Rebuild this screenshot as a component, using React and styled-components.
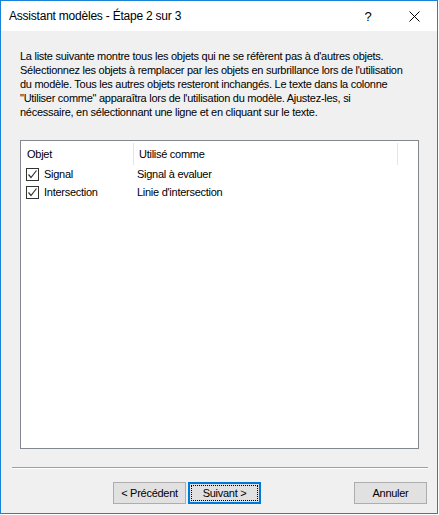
import React from "react";
import styled, { createGlobalStyle } from "styled-components";

const Global = createGlobalStyle`
  html, body { margin: 0; padding: 0; background: #ffffff; }
  body { font-family: "Liberation Sans", Arial, sans-serif; }
  * { box-sizing: border-box; }
`;

const Window = styled.div`
  width: 438px;
  height: 514px;
  border: 1px solid #1883d7;
  display: flex;
  flex-direction: column;
  background: #f0f0f0;
  font-family: "Liberation Sans", Arial, sans-serif;
  font-size: 11px;
  letter-spacing: -0.27px;
  color: #000;
`;

const TitleBar = styled.div`
  height: 30px;
  flex: none;
  background: #ffffff;
  display: flex;
  align-items: center;
  padding-left: 8px;
`;

const Title = styled.div`
  flex: 1;
  font-size: 12px;
  letter-spacing: -0.22px;
  color: #000;
  white-space: nowrap;
`;

const CaptionButton = styled.div`
  width: 46px;
  height: 30px;
  display: flex;
  align-items: center;
  justify-content: center;
  font-size: 13px;
  color: #000;
`;

const Body = styled.div`
  flex: none;
  display: flex;
  flex-direction: column;
  padding: 18px 18px 0 19px;
`;

const Intro = styled.div`
  line-height: 14px;
`;

const Line = styled.span`
  display: block;
  white-space: nowrap;
`;

const ListBox = styled.div`
  margin-top: 21px;
  width: 399px;
  height: 309px;
  border: 1px solid #828790;
  background: #ffffff;
  display: flex;
  flex-direction: column;
`;

const HeaderRow = styled.div`
  display: grid;
  grid-template-columns: 113px 264px;
  height: 24px;
`;

const HeaderCell = styled.div`
  display: flex;
  align-items: center;
  padding-left: ${(p) => p.$pad}px;
  border-right: 1px solid #e5e5e5;
  margin: 2px 0 0 0;
`;

const Row = styled.div`
  display: grid;
  grid-template-columns: 113px 264px;
  height: 18px;
  align-items: center;
`;

const FirstCell = styled.div`
  display: flex;
  align-items: center;
  padding-left: 5px;
  gap: 5px;
`;

const Cell = styled.div`
  padding-left: 3px;
`;

const Check = styled.span`
  width: 13px;
  height: 13px;
  border: 1px solid #333333;
  background: #fff;
  display: inline-flex;
  align-items: center;
  justify-content: center;
`;

const Separator = styled.div`
  flex: none;
  margin: 18px 9px 0 11px;
  height: 2px;
  border-top: 1px solid #a0a0a0;
  border-bottom: 1px solid #ffffff;
`;

const Footer = styled.div`
  display: flex;
  padding: 13px 10px 0 112px;
  gap: 2px;
`;

const Button = styled.button`
  width: 73px;
  height: 22px;
  padding: 0;
  font-family: "Liberation Sans", Arial, sans-serif;
  font-size: 11px;
  letter-spacing: -0.27px;
  color: #000;
  background: #e1e1e1;
  border: ${(p) => (p.$focused ? "2px solid #0078d7" : "1px solid #adadad")};
  margin-left: ${(p) => (p.$push ? "auto" : "0")};
  display: flex;
  align-items: center;
  justify-content: center;
  position: relative;
`;

const FocusRing = styled.span`
  position: absolute;
  inset: 1px;
  border: 1px dotted #000;
`;

const CheckMark = () => (
  <svg width="11" height="11" viewBox="0 0 11 11">
    <path d="M1.5 5.5 L4 8.5 L9.5 1.5" fill="none" stroke="#333" strokeWidth="1.2" />
  </svg>
);

const CloseIcon = () => (
  <svg width="11" height="11" viewBox="0 0 11 11">
    <path d="M0.5 0.5 L10.5 10.5 M10.5 0.5 L0.5 10.5" stroke="#000" strokeWidth="1" />
  </svg>
);

const rows = [
  ["Signal", "Signal à evaluer"],
  ["Intersection", "Linie d'intersection"],
];

export default function App() {
  return (
    <>
      <Global />
      <Window>
        <TitleBar>
          <Title>Assistant modèles - Étape 2 sur 3</Title>
          <CaptionButton>?</CaptionButton>
          <CaptionButton>
            <CloseIcon />
          </CaptionButton>
        </TitleBar>
        <Body>
          <Intro>
            <Line>La liste suivante montre tous les objets qui ne se réfèrent pas à d'autres objets.</Line>
            <Line>Sélectionnez les objets à remplacer par les objets en surbrillance lors de l'utilisation</Line>
            <Line>du modèle. Tous les autres objets resteront inchangés. Le texte dans la colonne</Line>
            <Line>"Utiliser comme" apparaîtra lors de l'utilisation du modèle. Ajustez-les, si</Line>
            <Line>nécessaire, en sélectionnant une ligne et en cliquant sur le texte.</Line>
          </Intro>
          <ListBox>
            <HeaderRow>
              <HeaderCell $pad={6}>Objet</HeaderCell>
              <HeaderCell $pad={5}>Utilisé comme</HeaderCell>
            </HeaderRow>
            {rows.map(([a, b]) => (
              <Row key={a}>
                <FirstCell>
                  <Check>
                    <CheckMark />
                  </Check>
                  {a}
                </FirstCell>
                <Cell>{b}</Cell>
              </Row>
            ))}
          </ListBox>
        </Body>
        <Separator />
        <Footer>
          <Button>&lt; Précédent</Button>
          <Button $focused>
            Suivant &gt;
            <FocusRing />
          </Button>
          <Button $push>Annuler</Button>
        </Footer>
      </Window>
    </>
  );
}
